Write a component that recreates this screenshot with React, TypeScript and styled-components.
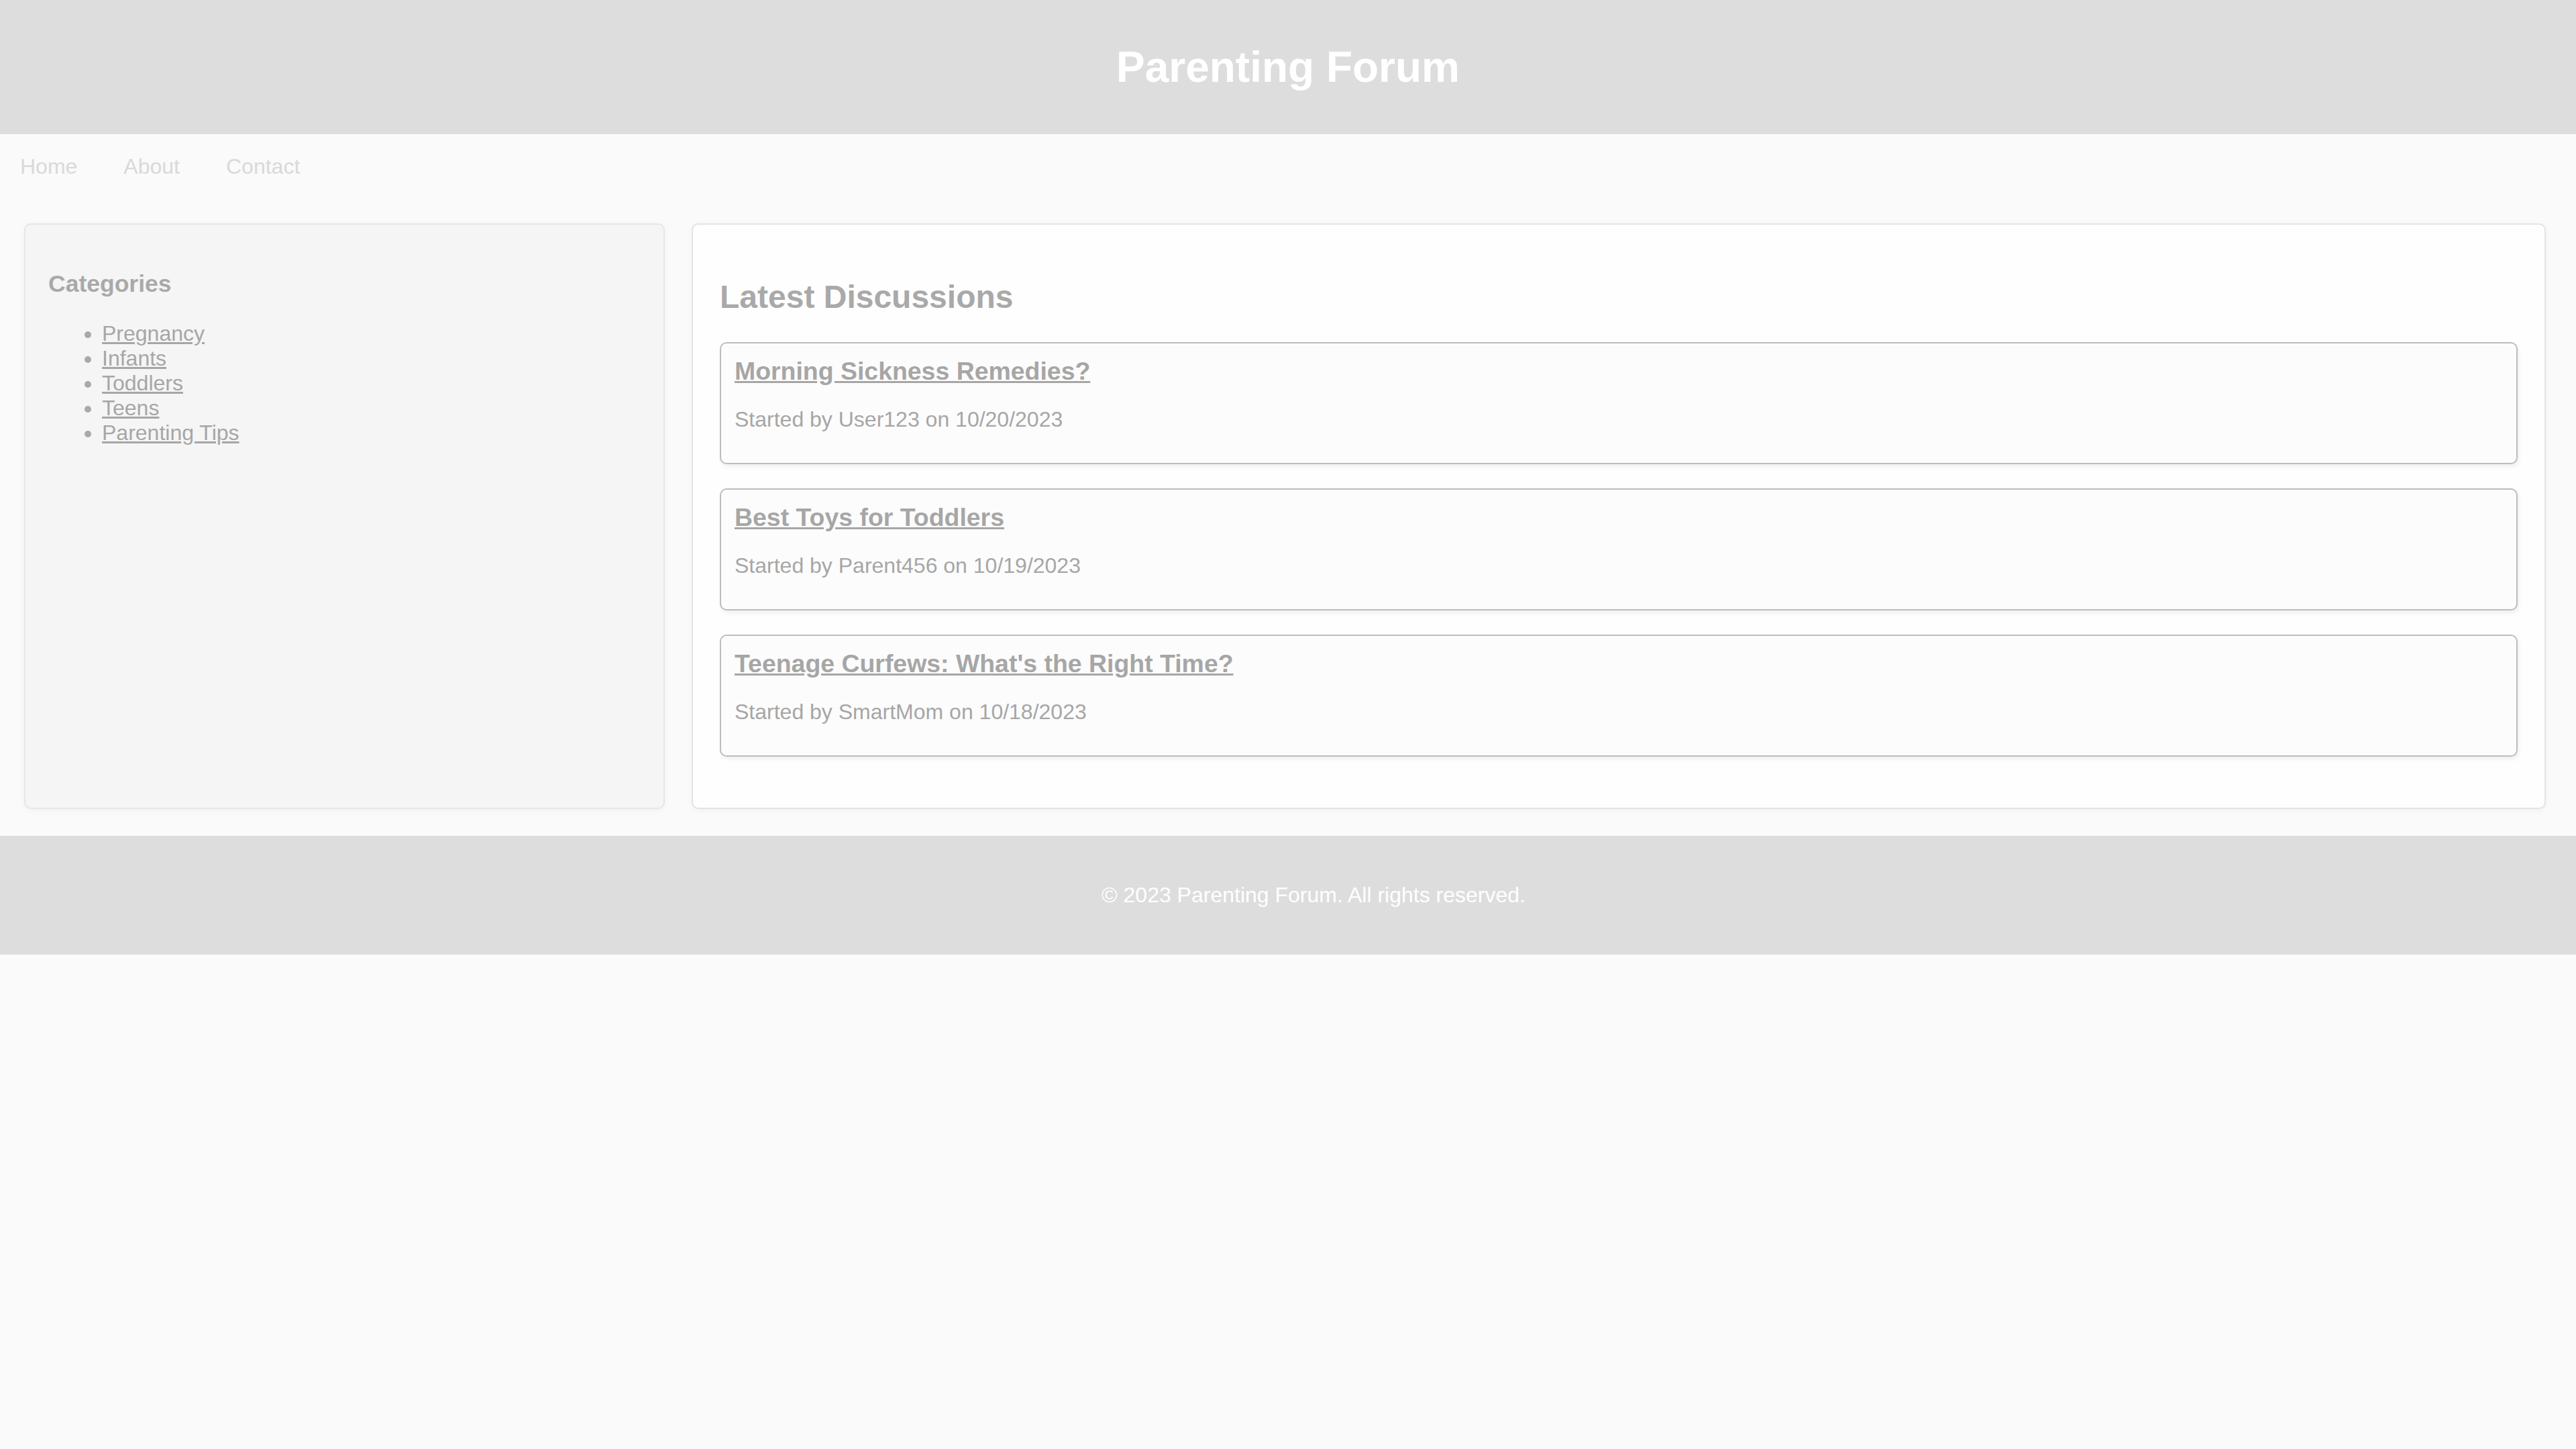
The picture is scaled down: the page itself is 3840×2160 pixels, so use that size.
import styled, { createGlobalStyle } from 'styled-components';

const GlobalStyle = createGlobalStyle`
  html, body {
    margin: 0;
    padding: 0;
    background: #fafafa;
  }
  body {
    font-family: "Liberation Sans", Arial, Helvetica, sans-serif;
    color: #a8a8a8;
  }
`;

const categories = ['Pregnancy', 'Infants', 'Toddlers', 'Teens', 'Parenting Tips'];

const threads = [
  { title: 'Morning Sickness Remedies?', author: 'User123', date: '10/20/2023' },
  { title: 'Best Toys for Toddlers', author: 'Parent456', date: '10/19/2023' },
  { title: "Teenage Curfews: What's the Right Time?", author: 'SmartMom', date: '10/18/2023' },
];

const Header = styled.header`
  background: #dddddd;
  padding: 20px;
  text-align: center;
`;

const SiteTitle = styled.h1`
  margin: 43px 0;
  font-size: 64px;
  font-weight: bold;
  color: #ffffff;
`;

const Nav = styled.nav`
  display: flex;
  gap: 69px;
  padding: 30px;
`;

const NavLink = styled.a`
  font-size: 32px;
  color: #d9d9d9;
  text-decoration: none;
`;

const Layout = styled.div`
  display: flex;
  align-items: stretch;
  gap: 40px;
  padding: 36px 45px 40px 36px;
`;

const Panel = styled.aside`
  box-sizing: border-box;
  width: 955px;
  flex-shrink: 0;
  padding: 32px 34px;
  background: #f5f5f5;
  border: 2px solid #e6e6e6;
  border-radius: 10px;
  box-shadow: 0 2px 10px rgba(0, 0, 0, 0.04);
`;

const PanelHeading = styled.h3`
  margin: 35.5px 0;
  font-size: 35.5px;
  font-weight: bold;
  color: #a9a9a9;
`;

const CategoryList = styled.ul`
  margin: 0;
  padding-left: 80px;
  font-size: 32px;
  color: #a9a9a9;
`;

const CategoryLink = styled.a`
  color: #a6a6a6;
  text-decoration: underline;
`;

const Discussions = styled.main`
  flex: 1;
  padding: 40px;
  background: #fefefe;
  border: 2px solid #e4e4e4;
  border-radius: 10px;
  box-shadow: 0 2px 10px rgba(0, 0, 0, 0.04);
`;

const DiscussionsHeading = styled.h2`
  margin: 39.84px 0;
  font-size: 48px;
  font-weight: bold;
  color: #a9a9a9;
`;

const ThreadCard = styled.div`
  padding: 20px;
  margin-bottom: 36px;
  background: #fcfcfc;
  border: 2px solid #bdbdbd;
  border-radius: 10px;
  box-shadow: 2px 4px 6px rgba(0, 0, 0, 0.06);
`;

const ThreadTitle = styled.h3`
  margin: 0 0 32px;
  font-size: 37.44px;
  font-weight: bold;
`;

const ThreadLink = styled.a`
  color: #a6a6a6;
  text-decoration: underline;
`;

const ThreadMeta = styled.p`
  margin: 0 0 26px;
  font-size: 32px;
  color: #a6a6a6;
`;

const Footer = styled.footer`
  background: #dddddd;
  padding: 40px 40px 40px 116px;
  text-align: center;
`;

const FooterText = styled.p`
  margin: 30px 0;
  font-size: 32px;
  color: #ffffff;
`;

export default function App() {
  return (
    <>
      <GlobalStyle />
      <Header>
        <SiteTitle>Parenting Forum</SiteTitle>
      </Header>
      <Nav>
        <NavLink href="#">Home</NavLink>
        <NavLink href="#">About</NavLink>
        <NavLink href="#">Contact</NavLink>
      </Nav>
      <Layout>
        <Panel>
          <PanelHeading>Categories</PanelHeading>
          <CategoryList>
            {categories.map((c) => (
              <li key={c}>
                <CategoryLink href="#">{c}</CategoryLink>
              </li>
            ))}
          </CategoryList>
        </Panel>
        <Discussions>
          <DiscussionsHeading>Latest Discussions</DiscussionsHeading>
          {threads.map((t) => (
            <ThreadCard key={t.title}>
              <ThreadTitle>
                <ThreadLink href="#">{t.title}</ThreadLink>
              </ThreadTitle>
              <ThreadMeta>
                Started by {t.author} on {t.date}
              </ThreadMeta>
            </ThreadCard>
          ))}
        </Discussions>
      </Layout>
      <Footer>
        <FooterText>© 2023 Parenting Forum. All rights reserved.</FooterText>
      </Footer>
    </>
  );
}
